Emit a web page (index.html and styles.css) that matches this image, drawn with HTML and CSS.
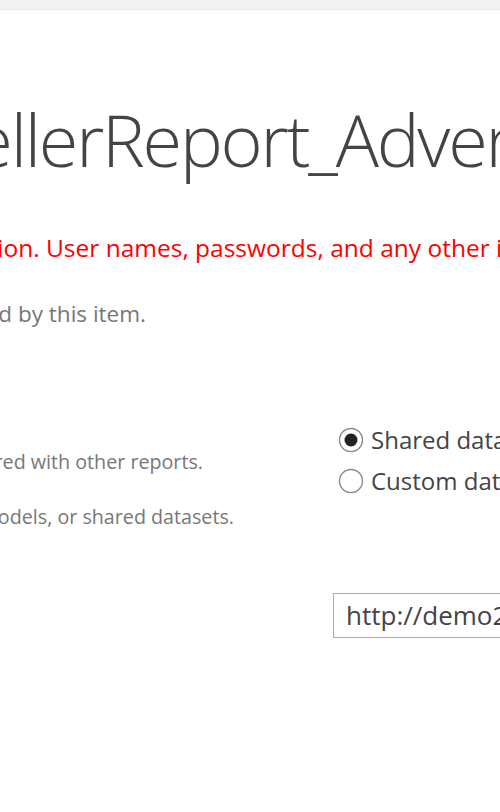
FILE: index.html
```html
<!DOCTYPE html>
<html lang="en">
<head>
<meta charset="utf-8">
<title>Edit Data Source</title>
<link rel="stylesheet" href="styles.css">
</head>
<body>
<div class="topbar"></div>
<main class="page">
  <h1 class="title">ResellerReport_AdventureWorks</h1>
  <p class="warning">Credentials are saved for this connection. User names, passwords, and any other information you enter are stored.</p>
  <div class="clip clip-intro"><p class="intro">Specify the data source used by this item.</p></div>

  <section class="row row-source">
    <div class="desc">
      <div class="clip clip-d1"><p class="note">Select a shared data source that can be shared with other reports.</p></div>
      <div class="clip clip-d2"><p class="note">Specify a custom data source, report models, or shared datasets.</p></div>
    </div>
    <div class="control">
      <label class="radio">
        <svg class="radio-icon" width="26" height="26" viewBox="0 0 26 26"><circle cx="13" cy="13" r="11.5" fill="#fff" stroke="#8a8a8a" stroke-width="1.4"/><circle cx="13" cy="13" r="6.5" fill="#222"/></svg>
        <span>Shared data source</span>
      </label>
      <label class="radio">
        <svg class="radio-icon" width="26" height="26" viewBox="0 0 26 26"><circle cx="13" cy="13" r="11.5" fill="#fff" stroke="#8a8a8a" stroke-width="1.4"/></svg>
        <span>Custom data source</span>
      </label>
    </div>
  </section>

  <section class="row row-link">
    <div class="desc"></div>
    <div class="control">
      <div class="textbox">http://demo2013/Reports/Data Sources/AdventureWorks.rsds</div>
    </div>
  </section>
</main>
</body>
</html>
```

FILE: styles.css
```css
html, body {
  margin: 0;
  padding: 0;
  background: #fff;
  overflow: hidden;
  width: 500px;
  height: 812px;
}
body {
  font-family: "Open Sans", "Noto Sans", "Liberation Sans", sans-serif;
  color: #444;
}
.topbar {
  height: 9px;
  background: #f3f3f3;
  border-bottom: 1px solid #e9e9e9;
}
.page {
  display: flex;
  flex-direction: column;
}
.title {
  margin: 89px 0 0 0;
  font-family: "Open Sans", "Noto Sans", sans-serif;
  font-weight: 300;
  font-size: 72px;
  line-height: 80px;
  letter-spacing: -2.2px;
  color: #444;
  white-space: nowrap;
  text-indent: -136px;
}
.warning {
  margin: 54px 0 0 0;
  font-size: 24.5px;
  line-height: 30px;
  color: #ff0000;
  white-space: nowrap;
  text-indent: -433px;
}
.clip {
  display: flex;
  justify-content: flex-end;
  white-space: nowrap;
}
.clip p { margin: 0; flex: none; }
.intro {
  font-size: 22.5px;
  line-height: 30px;
  color: #777;
}
.clip-intro { width: 146px; margin-top: 36px; }
.row {
  display: grid;
  grid-template-columns: 333px 1fr;
}
.row-source { margin-top: 90px; }
.desc { padding-top: 28px; }
.note {
  font-size: 19.7px;
  line-height: 30px;
  color: #777;
}
.clip-d1 { width: 203px; }
.clip-d2 { width: 234px; margin-top: 25px; }
.control {
  display: flex;
  flex-direction: column;
  white-space: nowrap;
}
.radio {
  display: flex;
  align-items: center;
  gap: 7px;
  height: 41px;
  padding-left: 5px;
  font-size: 24px;
  color: #444;
}
.radio-icon { flex: none; }
.row-link { margin-top: 61px; }
.textbox {
  box-sizing: border-box;
  height: 45px;
  width: 400px;
  border: 1px solid #ababab;
  padding: 0 12px;
  font-size: 26px;
  line-height: 43px;
  color: #444;
  white-space: nowrap;
}
```
